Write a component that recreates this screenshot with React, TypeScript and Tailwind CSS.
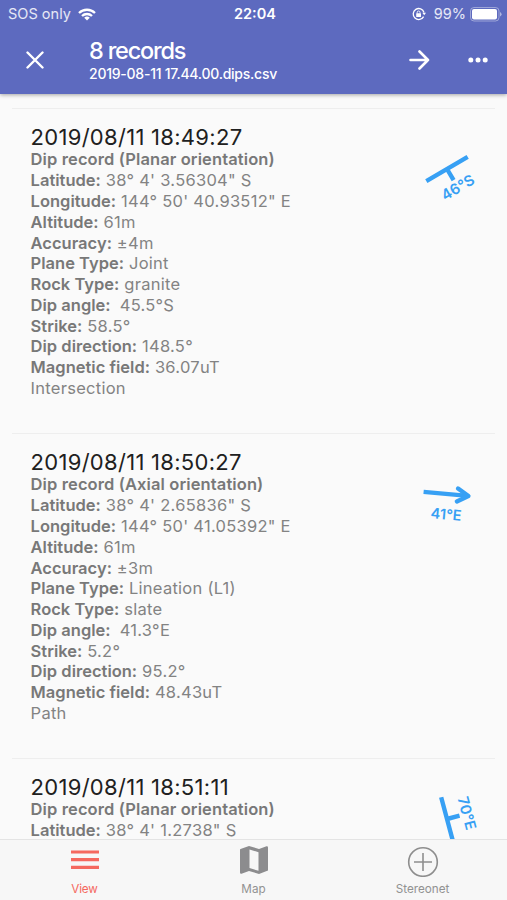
import type { ReactNode } from "react";

interface Field {
	label: string;
	value: string;
}

interface DipRecord {
	time: string;
	kind: string;
	fields: Field[];
	note?: string;
	symbol: ReactNode;
}

const records: DipRecord[] = [
	{
		time: "2019/08/11 18:49:27",
		kind: "Dip record (Planar orientation)",
		fields: [
			{ label: "Latitude:", value: "38° 4' 3.56304\" S" },
			{ label: "Longitude:", value: "144° 50' 40.93512\" E" },
			{ label: "Altitude:", value: "61m" },
			{ label: "Accuracy:", value: "±4m" },
			{ label: "Plane Type:", value: "Joint" },
			{ label: "Rock Type:", value: "granite" },
			{ label: "Dip angle: ", value: "45.5°S" },
			{ label: "Strike:", value: "58.5°" },
			{ label: "Dip direction:", value: "148.5°" },
			{ label: "Magnetic field:", value: "36.07uT" },
		],
		note: "Intersection",
		symbol: <PlanarSymbol strike={-30.5} label="46°S" />,
	},
	{
		time: "2019/08/11 18:50:27",
		kind: "Dip record (Axial orientation)",
		fields: [
			{ label: "Latitude:", value: "38° 4' 2.65836\" S" },
			{ label: "Longitude:", value: "144° 50' 41.05392\" E" },
			{ label: "Altitude:", value: "61m" },
			{ label: "Accuracy:", value: "±3m" },
			{ label: "Plane Type:", value: "Lineation (L1)" },
			{ label: "Rock Type:", value: "slate" },
			{ label: "Dip angle: ", value: "41.3°E" },
			{ label: "Strike:", value: "5.2°" },
			{ label: "Dip direction:", value: "95.2°" },
			{ label: "Magnetic field:", value: "48.43uT" },
		],
		note: "Path",
		symbol: <AxialSymbol trend={5.2} label="41°E" />,
	},
	{
		time: "2019/08/11 18:51:11",
		kind: "Dip record (Planar orientation)",
		fields: [{ label: "Latitude:", value: "38° 4' 1.2738\" S" }],
		symbol: <PlanarSymbol strike={75} label="70°E" flip />,
	},
];

interface PlanarSymbolProps {
	strike: number;
	label: string;
	flip?: boolean;
}

// Strike line with a short dip tick, drawn around the middle of the line.
function PlanarSymbol({ strike, label, flip }: PlanarSymbolProps) {
	return (
		<svg
			viewBox="-47 -44 107 90"
			className="h-[90px] w-[107px] overflow-visible"
			fill="none"
			stroke="#37a0f4"
			strokeWidth="4.4"
		>
			<g transform={`rotate(${strike})`}>
				<path d={flip ? "M-22.5 0H22M0 0V-13" : "M-24 0H24M0 0V13"} />
				<text
					x={flip ? -0.5 : 0}
					y={flip ? -15.5 : 26.5}
					textAnchor="middle"
					fontSize="14.8"
					fontWeight="600"
					fill="#37a0f4"
					stroke="none"
				>
					{label}
				</text>
			</g>
		</svg>
	);
}

function AxialSymbol({ trend, label }: { trend: number; label: string }) {
	return (
		<svg
			viewBox="-47 -44 107 90"
			className="h-[90px] w-[107px] overflow-visible"
			fill="none"
			stroke="#37a0f4"
			strokeWidth="4.4"
		>
			<g transform={`rotate(${trend})`}>
				<path d="M-23.5 0H21" />
				<path d="M10.5 -6.5L21.5 0L10.5 6.5" strokeLinecap="round" strokeLinejoin="round" />
				<text
					x="1"
					y="25.5"
					textAnchor="middle"
					fontSize="14.5"
					fontWeight="600"
					fill="#37a0f4"
					stroke="none"
				>
					{label}
				</text>
			</g>
		</svg>
	);
}

function WifiIcon() {
	return (
		<svg viewBox="0 0 18 13" className="h-[13px] w-[18px]" fill="none" stroke="white" strokeWidth="2.3">
			<path d="M1 5A11.5 11.5 0 0 1 17 5" />
			<path d="M4 8A7.2 7.2 0 0 1 14 8" />
			<path d="M9 12.6L6.2 9.8A4 4 0 0 1 11.8 9.8Z" fill="white" stroke="none" />
		</svg>
	);
}

function RotationLockIcon() {
	return (
		<svg viewBox="0 0 14 14" className="h-3.5 w-3.5" fill="none" stroke="white">
			<path d="M11.6 9.6A5.5 5.5 0 1 1 12 5.5" strokeWidth="1.3" />
			<path d="M10.3 5.8H14L12.2 8.3Z" fill="white" stroke="none" />
			<rect x="4.2" y="6.3" width="4.8" height="3.6" rx="0.5" fill="white" stroke="none" />
			<path d="M5.2 6.5V5.4A1.4 1.4 0 0 1 8 5.4V6.5" strokeWidth="0.9" />
		</svg>
	);
}

function BatteryIcon() {
	return (
		<svg viewBox="0 0 32 15" className="h-[15px] w-8" fill="none">
			<rect x="0.5" y="0.5" width="28.5" height="13.5" rx="3.5" stroke="white" strokeOpacity="0.4" />
			<rect x="2" y="2" width="25" height="10.5" rx="2" fill="white" />
			<path d="M30 5V9.5Q31.6 8.7 31.6 7.25T30 5Z" fill="white" fillOpacity="0.5" />
		</svg>
	);
}

function StatusBar() {
	return (
		<div className="grid h-7 grid-cols-[1fr_auto_1fr] items-center pr-[5px] pl-[8px] text-[14.5px]">
			<div className="flex items-center gap-[7px] text-white/85">
				<span className="tracking-[0.02px]">SOS only</span>
				<WifiIcon />
			</div>
			<span className="font-semibold">22:04</span>
			<div className="flex items-center justify-end">
				<RotationLockIcon />
				<span className="mr-[4px] ml-[8px] text-white/85">99%</span>
				<BatteryIcon />
			</div>
		</div>
	);
}

function TopBar() {
	return (
		<header className="relative z-10 h-[94px] shrink-0 bg-[#5d6abf] text-white shadow-[0_1px_4px_rgba(0,0,0,0.35)]">
			<StatusBar />
			<div className="flex h-[64px] items-center pr-[19px] pl-[26px]">
				<svg viewBox="0 0 18 18" className="h-[18px] w-[18px]" stroke="white" strokeWidth="2.4" strokeLinecap="round">
					<path d="M1.5 1.5L16.5 16.5M16.5 1.5L1.5 16.5" />
				</svg>
				<div className="ml-[45px] flex-1">
					<h1 className="text-[23.5px] leading-[26px] font-medium tracking-[-1.2px]">8 records</h1>
					<p className="text-[14px] leading-[19px] font-medium tracking-[-0.24px]">
						2019-08-11 17.44.00.dips.csv
					</p>
				</div>
				<svg
					viewBox="0 0 21 20"
					className="mr-[38px] h-5 w-[21px]"
					fill="none"
					stroke="white"
					strokeWidth="2.6"
					strokeLinecap="round"
					strokeLinejoin="round"
				>
					<path d="M1.5 10H19M10.5 1.5L19 10L10.5 18.5" />
				</svg>
				<svg viewBox="0 0 20 6" className="h-1.5 w-5" fill="white">
					<circle cx="2.8" cy="3" r="2.5" />
					<circle cx="10" cy="3" r="2.5" />
					<circle cx="17.2" cy="3" r="2.5" />
				</svg>
			</div>
		</header>
	);
}

function RecordItem({ record }: { record: DipRecord }) {
	return (
		<li className="mx-3 flex h-[325px] shrink-0 justify-between border-t border-[#eeeeee] pt-4 pl-[18.6px]">
			<div className="text-[16.5px] leading-[20.78px] tracking-[0.27px] text-[#838383]">
				<h2 className="text-[22px] leading-[24.4px] tracking-[0.29px] text-[#202020]">{record.time}</h2>
				<p className="font-semibold tracking-[0.11px] text-[#787878]">{record.kind}</p>
				{record.fields.map((field) => (
					<p key={field.label} className="whitespace-pre">
						<span className="font-semibold tracking-[0.01px] text-[#787878]">{field.label}</span> {field.value}
					</p>
				))}
				<p>{record.note}</p>
			</div>
			<div className="mr-[-12px]">{record.symbol}</div>
		</li>
	);
}

function TabBar() {
	return (
		<nav className="grid h-[61px] shrink-0 grid-cols-3 border-t border-[#e4e4e4] bg-[#f7f7f7] text-[11.7px] text-[#929292]">
			<div className="flex flex-col items-center pt-[5px] text-[#f5695f]">
				<svg viewBox="0 0 30 32" className="h-8 w-[30px]" stroke="currentColor" strokeWidth="3.2">
					<path d="M1 7H29M1 14.7H29M1 22.4H29" />
				</svg>
				<span className="mt-[4px] leading-4 tracking-[-0.15px]">View</span>
			</div>
			<div className="flex flex-col items-center pt-[5px]">
				<svg viewBox="0 0 30 32" className="h-8 w-[30px]" fill="#8c8c8e">
					<path
						fillRule="evenodd"
						d="M1.5 4L10 1L20 4L27.5 1.3Q29 1 29 2.5V25.5L20 29L10 26L2.5 28.7Q1 29 1 27.5V5Q1 4.2 1.5 4ZM10.5 4.4V23L19.5 25.8V7.2Z"
					/>
				</svg>
				<span className="mt-[4px] leading-4">Map</span>
			</div>
			<div className="flex flex-col items-center pt-[5px]">
				<svg viewBox="0 0 32 32" className="h-8 w-8" fill="none" stroke="#8e8e8e" strokeWidth="1.6">
					<circle cx="16" cy="17" r="14.3" />
					<path d="M7 17H25M16 8V26" />
				</svg>
				<span className="mt-[4px] leading-4">Stereonet</span>
			</div>
		</nav>
	);
}

export default function App() {
	return (
		<div className="flex h-[900px] w-[507px] flex-col overflow-hidden bg-[#fafafa] font-['Inter',sans-serif]">
			<TopBar />
			<ul className="flex min-h-0 flex-1 flex-col overflow-hidden pt-[14px]">
				{records.map((record) => (
					<RecordItem key={record.time} record={record} />
				))}
			</ul>
			<TabBar />
		</div>
	);
}
